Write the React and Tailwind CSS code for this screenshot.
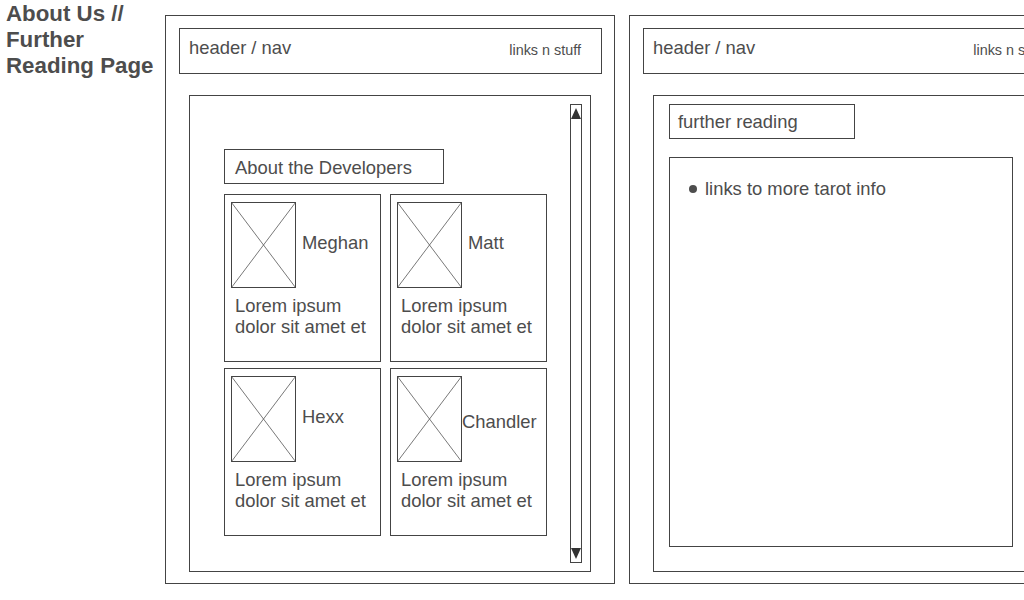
import React from "react";

const line = "border border-[#444]";

const Placeholder = () => (
  <svg width="65" height="86" viewBox="0 0 65 86" className="shrink-0 block">
    <rect x="0.5" y="0.5" width="64" height="85" fill="white" stroke="#444" strokeWidth="1" />
    <line x1="0.5" y1="0.5" x2="64.5" y2="85.5" stroke="#555" strokeWidth="0.8" />
    <line x1="64.5" y1="0.5" x2="0.5" y2="85.5" stroke="#555" strokeWidth="0.8" />
  </svg>
);

const developers = [
  { name: "Meghan", gap: "ml-[6px]", nudge: "mb-[6px]" },
  { name: "Matt", gap: "ml-[6px]", nudge: "mb-[6px]" },
  { name: "Hexx", gap: "ml-[6px]", nudge: "mb-[6px]" },
  { name: "Chandler", gap: "ml-0", nudge: "mt-[4px]" },
];

const Header = () => (
  <div className={`${line} ml-[13px] mt-[12px] w-[423px] h-[46px] flex justify-between shrink-0`}>
    <span className="pl-[9px] pt-[8px] text-[18.4px] leading-[21px] whitespace-nowrap">header / nav</span>
    <span className="pr-[20px] pt-[13px] text-[14.4px] leading-[16px] whitespace-nowrap">links n stuff</span>
  </div>
);

const DevCard = ({ dev }) => (
  <div className={`${line} w-[157px] h-[168px]`}>
    <div className="flex items-center ml-[6px] mt-[7px]">
      <Placeholder />
      <span className={`${dev.gap} ${dev.nudge} text-[18.4px] leading-[21px]`}>{dev.name}</span>
    </div>
    <p className="ml-[10px] mt-[7px] text-[18.4px] leading-[21px]">
      Lorem ipsum
      <br />
      dolor sit amet et
    </p>
  </div>
);

const Scrollbar = () => (
  <div className={`${line} w-[12px] h-[459px] mt-[8px] mr-[8px] ml-auto flex flex-col justify-between items-center py-[3px] shrink-0`}>
    <svg width="10" height="11" viewBox="0 0 10 11">
      <polygon points="5,0 10,11 0,11" fill="#333" />
    </svg>
    <svg width="10" height="11" viewBox="0 0 10 11">
      <polygon points="0,0 10,0 5,11" fill="#333" />
    </svg>
  </div>
);

export default function App() {
  return (
    <div
      className="w-[1024px] h-[600px] overflow-hidden bg-white flex text-[#4d4d4d]"
      style={{ fontFamily: '"Liberation Sans", Arial, sans-serif' }}
    >
      <div className="w-[165px] shrink-0 pl-[6px] pt-px">
        <h1 className="text-[22.3px] leading-[26px] font-bold whitespace-nowrap">
          About Us //
          <br />
          Further
          <br />
          Reading Page
        </h1>
      </div>

      {/* about us frame */}
      <div className={`${line} mt-[15px] w-[450px] h-[569px] shrink-0 flex flex-col`}>
        <Header />
        <div className={`${line} ml-[23px] mt-[21px] w-[402px] h-[477px] flex`}>
          <div className="ml-[34px] mt-[53px]">
            <div className={`${line} w-[220px] h-[35px] pl-[10px] pt-[7px] text-[18.4px] leading-[21px]`}>
              About the Developers
            </div>
            <div className="mt-[10px] grid grid-cols-[157px_157px] gap-x-[9px] gap-y-[6px]">
              {developers.map((dev) => (
                <DevCard key={dev.name} dev={dev} />
              ))}
            </div>
          </div>
          <Scrollbar />
        </div>
      </div>

      {/* further reading frame */}
      <div className={`${line} ml-[14px] mt-[15px] w-[450px] h-[569px] shrink-0 flex flex-col`}>
        <Header />
        <div className={`${line} ml-[23px] mt-[21px] w-[402px] h-[477px]`}>
          <div className={`${line} ml-[15px] mt-[8px] w-[186px] h-[35px] pl-[8px] pt-[6px] text-[18.4px] leading-[21px]`}>
            further reading
          </div>
          <div className={`${line} ml-[15px] mt-[18px] w-[344px] h-[390px] pt-[20px] pl-[19px]`}>
            <div className="flex items-center text-[18.4px] leading-[21px]">
              <span className="w-[8px] h-[8px] rounded-full bg-[#4d4d4d] mr-[8px]" />
              <span>links to more tarot info</span>
            </div>
          </div>
        </div>
      </div>
    </div>
  );
}
